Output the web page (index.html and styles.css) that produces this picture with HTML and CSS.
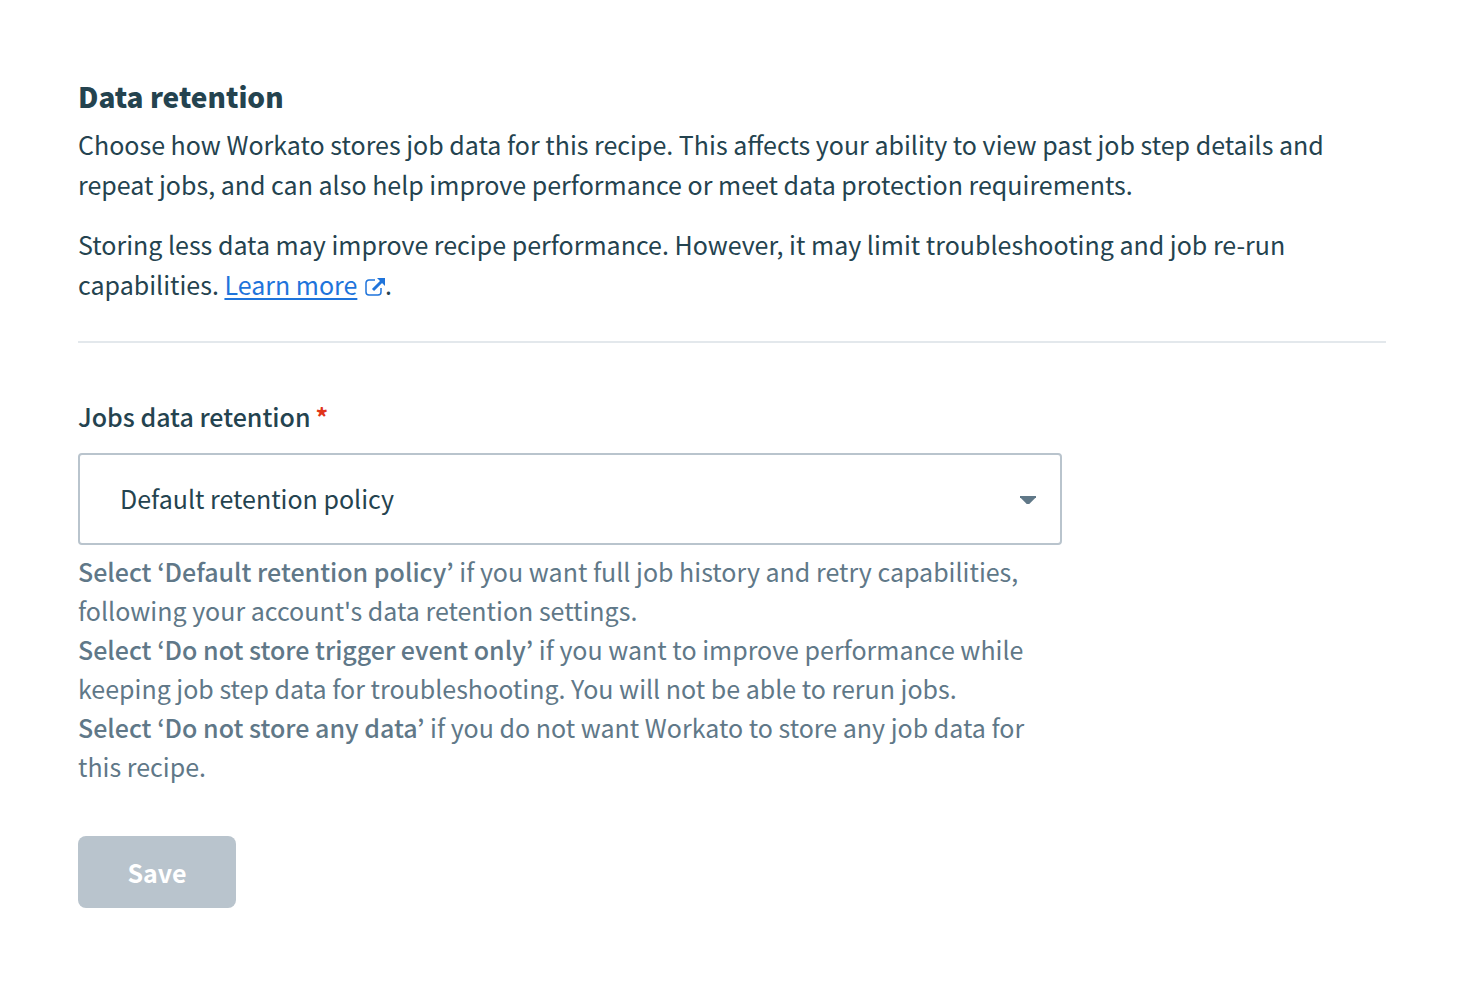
FILE: index.html
```html
<!doctype html>
<html lang="en">
<head>
	<meta charset="utf-8">
	<title>Data retention</title>
	<link rel="stylesheet" href="styles.css">
</head>
<body>

<main class="settings">
	<section class="intro">
		<h1>Data retention</h1>
		<p>Choose how Workato stores job data for this recipe. This affects your ability to view past job step details and repeat jobs, and can also help improve performance or meet data protection requirements.</p>
		<p>Storing less data may improve recipe performance. However, it may limit troubleshooting and job re-run capabilities. <a href="#">Learn more</a> <svg class="external" viewBox="0 0 20 18" aria-hidden="true"><path class="frame" d="M10 2H4a3 3 0 0 0-3 3v9a3 3 0 0 0 3 3h9a3 3 0 0 0 3-3v-4"/><path class="line" d="M8 12L17 3"/><path class="tip" d="M12 0h8v8z"/></svg>.</p>
	</section>

	<form class="retention">
		<label for="policy">Jobs data retention<span class="required">*</span></label>
		<div class="select">
			<select id="policy" required>
				<option>Default retention policy</option>
				<option>Do not store trigger event only</option>
				<option>Do not store any data</option>
			</select>
		</div>
		<div class="hint">
			<p><b>Select ‘Default retention policy’</b> if you want full job history and retry capabilities, following your account's data retention settings.</p>
			<p><b>Select ‘Do not store trigger event only’</b> if you want to improve performance while keeping job step data for troubleshooting. You will not be able to rerun jobs.</p>
			<p><b>Select ‘Do not store any data’</b> if you do not want Workato to store any job data for this recipe.</p>
		</div>
		<button type="submit" disabled>Save</button>
	</form>
</main>

</body>
</html>
```
FILE: styles.css
```css
*{ box-sizing: border-box; margin: 0; padding: 0}
body{ background: #fff; color: #24434f; font: 25px/40px "Noto Sans CJK KR", "Noto Sans", sans-serif}
.settings{ padding: 76px 81px 78px 78px}

.intro{ padding-bottom: 37px; border-bottom: 2px solid #e3e8ec}
.intro h1{ font-size: 28px; line-height: 40px; font-weight: 900; margin-bottom: 8px}
.intro p + p{ margin-top: 20px}
.intro a{ color: #1f74db; text-decoration-thickness: 2px; text-underline-offset: 3px}
.external{ width: 20px; height: 18px; margin-left: 2px; vertical-align: -1px; fill: none; stroke: #1f74db}
.external .frame{ stroke-width: 1.500}
.external .line{ stroke-width: 3}
.external .tip{ fill: #1f74db; stroke: none}

.retention{ max-width: 984px; padding-top: 53px}
.retention label{ display: block; font-weight: 500; margin-bottom: 17px}
.required{ margin-left: 5px; color: #e0341a; font-weight: 700}
.select{ display: grid; align-items: center}
.select::after{ content: ""; grid-area: 1 / 1; justify-self: end; margin: 2px 26px 0 0; width: 16px; height: 8px; background: #607888; clip-path: polygon(0 0, 100% 0, 100% 15%, 58% 100%, 42% 100%, 0 15%); pointer-events: none}
.select select{ grid-area: 1 / 1; appearance: none; width: 100%; height: 92px; padding: 0 60px 2px 40px; border: 2px solid #b9c4cd; border-radius: 4px; background: #fff; color: inherit; font: inherit}
.hint{ margin-top: 7px; color: #607888; line-height: 39px}
.hint b{ font-weight: 500}
.retention button{ margin-top: 50px; width: 158px; height: 72px; border: 0; border-radius: 8px; background: #b9c4cd; color: #fff; font: inherit; font-weight: 700}
```
